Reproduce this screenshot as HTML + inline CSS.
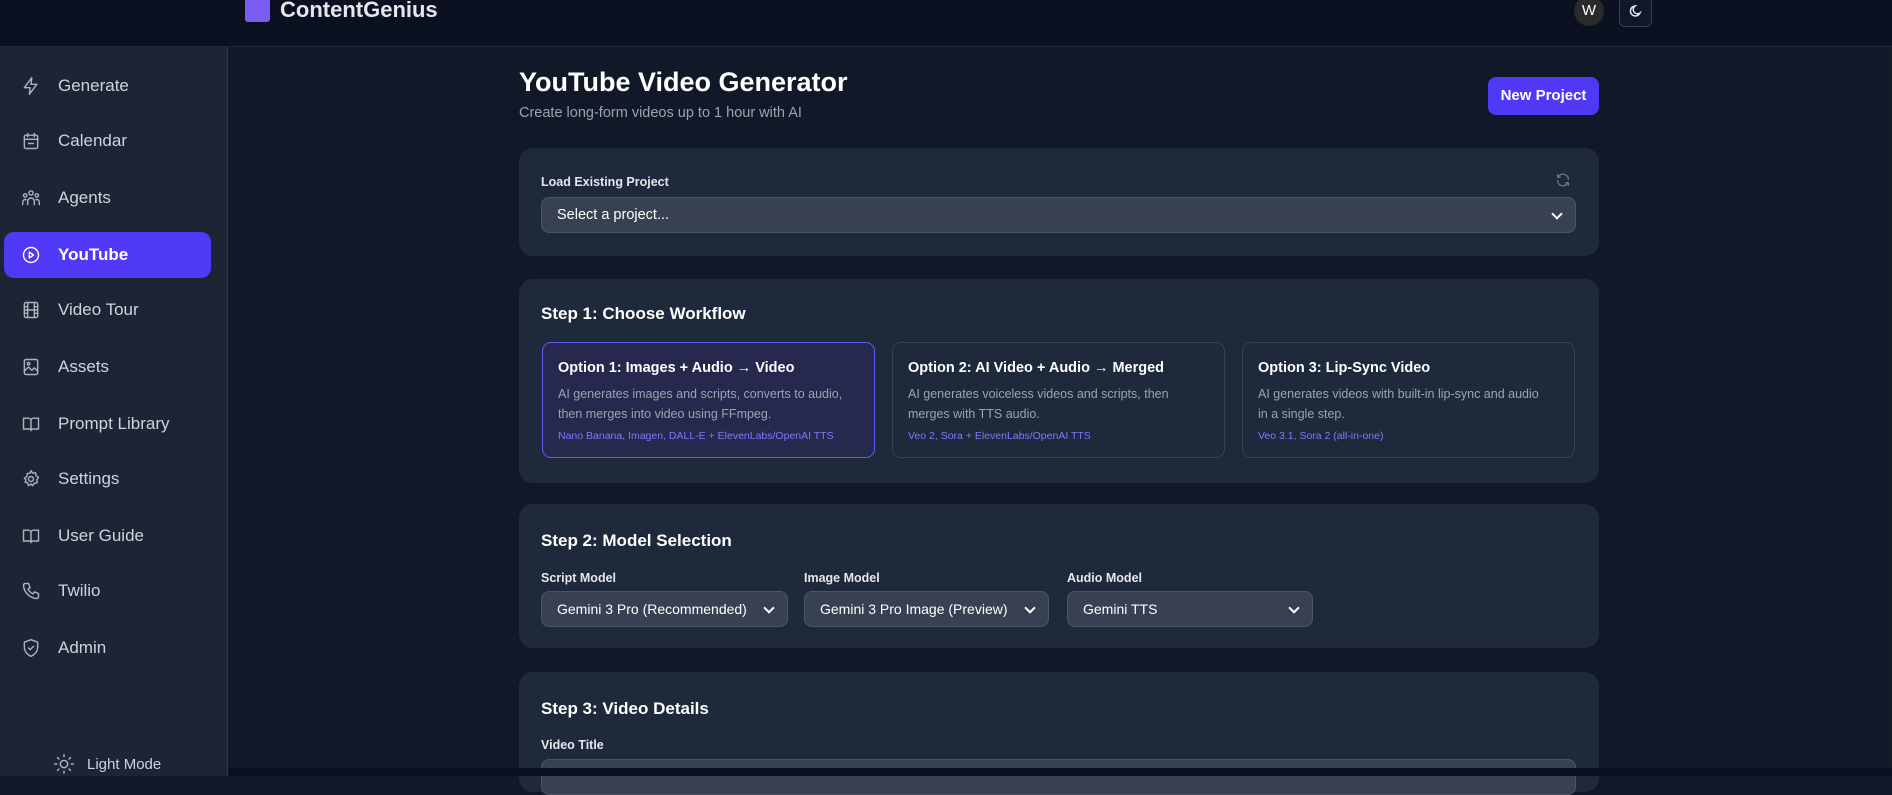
<!DOCTYPE html>
<html><head><meta charset="utf-8"><style>
*{box-sizing:border-box;margin:0;padding:0}
body{width:1892px;height:776px;overflow:hidden;background:#111827;font-family:"Liberation Sans",sans-serif;color:#fff;position:relative}
.a{position:absolute}
#hdr{left:0;top:0;width:1892px;height:47px;background:#0b1120;border-bottom:1px solid #1f2937}
#side{left:0;top:47px;width:228px;height:729px;background:#1c2533;border-right:1px solid #2d3748}
.nav{position:absolute;left:4px;width:207px;height:46px;display:flex;align-items:center;padding-left:17px;font-size:17px;color:#cbd5e1;border-radius:10px}
.nav svg{width:20px;height:20px;margin-right:17px;fill:none;stroke:#aab3c0;stroke-width:1.7;stroke-linecap:round;stroke-linejoin:round}
.nav.act{background:#4f39f6;color:#fff;font-weight:bold}
.nav.act svg{stroke:#fff}
.card{position:absolute;left:519px;width:1080px;background:#1e293b;border-radius:14px}
.h{position:absolute;left:22px;font-size:17px;font-weight:bold}
.lbl{position:absolute;font-size:12.5px;font-weight:bold;color:#e5e7eb}
.sel{position:absolute;background:#374151;border:1px solid #4b5563;border-radius:8px;height:36px;font-size:14.5px;color:#fff;display:flex;align-items:center;padding-left:15px}
.sel.dd:after{content:"";position:absolute;right:14px;top:12px;width:6px;height:6px;border-right:2px solid #fff;border-bottom:2px solid #fff;transform:rotate(45deg)}
.opt{position:absolute;top:63px;width:333px;height:116px;border:1px solid #374151;border-radius:9px;padding:17px 15px}
.opt b{display:block;font-size:14.5px;margin-bottom:8px}
.opt p{font-size:12.5px;color:#9ca3af;line-height:20px}
.opt i{display:block;font-style:normal;font-size:10.5px;color:#7b7bff;margin-top:6px}
</style></head><body>
<div id="hdr" class="a">
 <div class="a" style="left:245px;top:0;width:25px;height:22px;background:#7c5cf0;border-radius:0 0 3px 3px"></div>
 <div class="a" style="left:280px;top:-3px;font-size:22px;font-weight:bold;color:#e5e7eb">ContentGenius</div>
 <div class="a" style="left:1574px;top:-4px;width:30px;height:30px;border-radius:50%;background:#2a2a2a;color:#fff;font-size:15px;text-align:center;line-height:30px">W</div>
 <div class="a" style="left:1619px;top:-4px;width:33px;height:31px;border:1px solid #374151;border-radius:6px;background:#0f172a"><svg width="33" height="31" viewBox="0 0 33 31"><path d="M20 16a5 5 0 1 1-5-7 4 4 0 0 0 5 7z" fill="none" stroke="#e5e7eb" stroke-width="1.5"/></svg></div>
</div>
<div class="a" style="left:1886px;top:47px;width:6px;height:721px;background:#131a27"></div>
<div id="side" class="a">
 <div class="nav" style="top:16px"><svg viewBox="0 0 24 24"><path d="M13 2 4 14h7l-1 8 9-12h-7z"/></svg>Generate</div>
 <div class="nav" style="top:71px"><svg viewBox="0 0 24 24"><rect x="4" y="5" width="16" height="16" rx="2"/><path d="M8 3v4M16 3v4M4 10h16M9 15h6"/></svg>Calendar</div>
 <div class="nav" style="top:128px"><svg viewBox="0 0 24 24"><circle cx="12" cy="6" r="2.5"/><circle cx="5" cy="9" r="2"/><circle cx="19" cy="9" r="2"/><path d="M8 20v-4a4 4 0 0 1 8 0v4M2 20v-3a3 3 0 0 1 4-3M22 20v-3a3 3 0 0 0-4-3"/></svg>Agents</div>
 <div class="nav act" style="top:185px"><svg viewBox="0 0 24 24"><circle cx="12" cy="12" r="9"/><path d="M10 8.5v7l5-3.5z"/></svg>YouTube</div>
 <div class="nav" style="top:240px"><svg viewBox="0 0 24 24"><rect x="4" y="3" width="16" height="18" rx="2"/><path d="M8 3v18M16 3v18M4 8h4M4 12h16M4 16h4M16 8h4M16 16h4"/></svg>Video Tour</div>
 <div class="nav" style="top:297px"><svg viewBox="0 0 24 24"><rect x="4" y="3" width="16" height="18" rx="2"/><circle cx="9" cy="8" r="1.5"/><path d="M4 17l5-5 4 4 3-3 4 4"/></svg>Assets</div>
 <div class="nav" style="top:354px"><svg viewBox="0 0 24 24"><path d="M3 5h6a3 3 0 0 1 3 3v12a2 2 0 0 0-2-2H3zM21 5h-6a3 3 0 0 0-3 3v12a2 2 0 0 1 2-2h7z"/></svg>Prompt Library</div>
 <div class="nav" style="top:409px"><svg viewBox="0 0 24 24"><circle cx="12" cy="12" r="3"/><path d="M12 2l2 3 3.5-.5.5 3.5 3 2-2 3 .5 3.5-3.5.5-2 3-2-2-3 2-1-3.5L5 16l1-3-2-2 3-2 .5-3.5L11 5z"/></svg>Settings</div>
 <div class="nav" style="top:466px"><svg viewBox="0 0 24 24"><path d="M3 5h6a3 3 0 0 1 3 3v12a2 2 0 0 0-2-2H3zM21 5h-6a3 3 0 0 0-3 3v12a2 2 0 0 1 2-2h7z"/></svg>User Guide</div>
 <div class="nav" style="top:521px"><svg viewBox="0 0 24 24"><path d="M5 3h4l2 5-2.5 1.5a11 11 0 0 0 6 6L16 13l5 2v4a2 2 0 0 1-2 2A17 17 0 0 1 3 5a2 2 0 0 1 2-2"/></svg>Twilio</div>
 <div class="nav" style="top:578px"><svg viewBox="0 0 24 24"><path d="M12 2l8 3v6c0 5-3.5 9-8 11-4.5-2-8-6-8-11V5z"/><path d="M9 12l2 2 4-4"/></svg>Admin</div>
 <div class="a" style="left:53px;top:706px;display:flex;align-items:center;font-size:15px;color:#cbd5e1"><svg width="22" height="22" viewBox="0 0 24 24" fill="none" stroke="#aab3c0" stroke-width="1.6" stroke-linecap="round"><circle cx="12" cy="12" r="4"/><path d="M12 2v2M12 20v2M2 12h2M20 12h2M5 5l1.5 1.5M17.5 17.5 19 19M5 19l1.5-1.5M17.5 6.5 19 5"/></svg><span style="margin-left:12px">Light Mode</span></div>
</div>

<div class="a" style="left:519px;top:67px;font-size:27px;font-weight:bold">YouTube Video Generator</div>
<div class="a" style="left:519px;top:105px;font-size:14.5px;color:#9ca3af">Create long-form videos up to 1 hour with AI</div>
<div class="a" style="left:1488px;top:77px;width:111px;height:38px;background:#4f39f6;border-radius:8px;font-size:15px;font-weight:bold;text-align:center;line-height:38px">New Project</div>

<div class="card" style="top:148px;height:108px">
 <div class="lbl" style="left:22px;top:27px">Load Existing Project</div>
 <svg class="a" style="left:1036px;top:24px" width="16" height="16" viewBox="0 0 24 24" fill="none" stroke="#6b7280" stroke-width="2" stroke-linecap="round"><path d="M20 11a8 8 0 0 0-14-5L4 8M4 4v4h4M4 13a8 8 0 0 0 14 5l2-2M20 20v-4h-4"/></svg>
 <div class="sel dd" style="left:22px;top:49px;width:1035px">Select a project...</div>
</div>

<div class="card" style="top:279px;height:204px">
 <div class="h" style="top:25px">Step 1: Choose Workflow</div>
 <div class="opt" style="left:23px;background:#26294d;border-color:#5b5cf0"><b>Option 1: Images + Audio → Video</b><p>AI generates images and scripts, converts to audio,<br>then merges into video using FFmpeg.</p><i>Nano Banana, Imagen, DALL-E + ElevenLabs/OpenAI TTS</i></div>
 <div class="opt" style="left:373px"><b>Option 2: AI Video + Audio → Merged</b><p>AI generates voiceless videos and scripts, then<br>merges with TTS audio.</p><i>Veo 2, Sora + ElevenLabs/OpenAI TTS</i></div>
 <div class="opt" style="left:723px"><b>Option 3: Lip-Sync Video</b><p>AI generates videos with built-in lip-sync and audio<br>in a single step.</p><i>Veo 3.1, Sora 2 (all-in-one)</i></div>
</div>

<div class="card" style="top:504px;height:144px">
 <div class="h" style="top:27px">Step 2: Model Selection</div>
 <div class="lbl" style="left:22px;top:67px">Script Model</div>
 <div class="lbl" style="left:285px;top:67px">Image Model</div>
 <div class="lbl" style="left:548px;top:67px">Audio Model</div>
 <div class="sel dd" style="left:22px;top:87px;width:247px;font-size:14px">Gemini 3 Pro (Recommended)</div>
 <div class="sel dd" style="left:285px;top:87px;width:245px;font-size:14px">Gemini 3 Pro Image (Preview)</div>
 <div class="sel dd" style="left:548px;top:87px;width:246px;font-size:14px">Gemini TTS</div>
</div>

<div class="card" style="top:672px;height:120px">
 <div class="h" style="top:27px">Step 3: Video Details</div>
 <div class="lbl" style="left:22px;top:66px">Video Title</div>
 <div class="sel" style="left:22px;top:87px;width:1035px"></div>
</div>
<div class="a" style="left:229px;top:768px;width:1663px;height:8px;background:#0b1120"></div>
</body></html>
